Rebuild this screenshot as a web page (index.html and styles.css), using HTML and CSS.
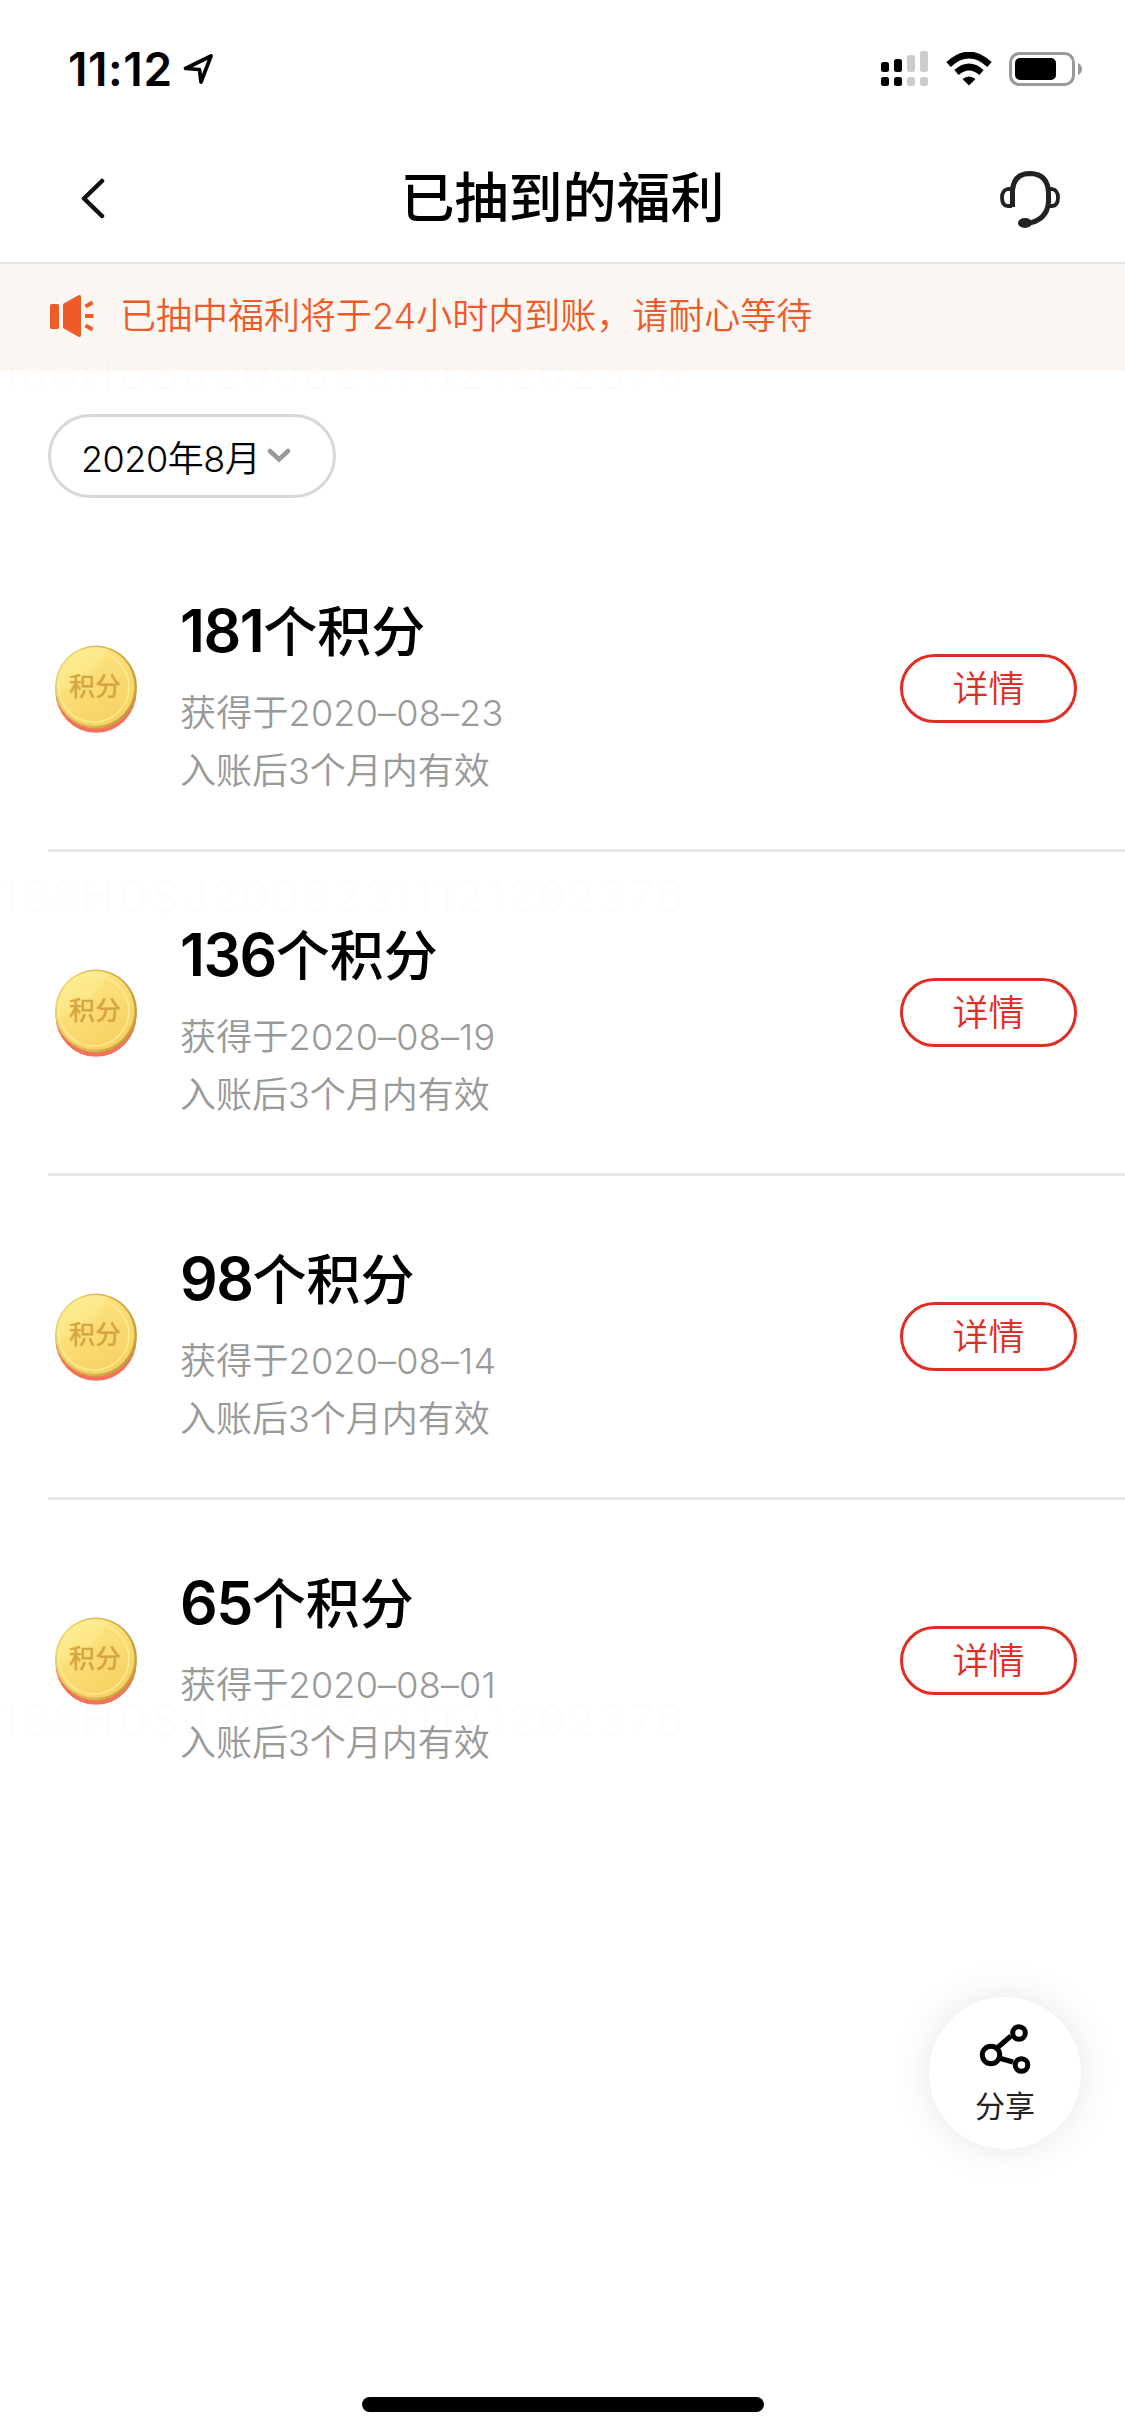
FILE: index.html
```html
<!DOCTYPE html>
<html lang="zh-CN">
<head>
<meta charset="utf-8">
<title>已抽到的福利</title>
<link rel="stylesheet" href="styles.css">
</head>
<body>
<svg class="defs" width="0" height="0" aria-hidden="true">
  <defs>
    <linearGradient id="face" x1="0" y1="0" x2="0.6" y2="1">
      <stop offset="0" stop-color="#fdec8c"/><stop offset="0.5" stop-color="#fbdd77"/><stop offset="1" stop-color="#f9d263"/>
    </linearGradient>
    <linearGradient id="shine" x1="0" y1="0" x2="0.5" y2="1">
      <stop offset="0" stop-color="#fff09a"/><stop offset="1" stop-color="#fdea8a" stop-opacity="0.2"/>
    </linearGradient>
    <linearGradient id="rim" x1="0" y1="0" x2="1" y2="0.3">
      <stop offset="0" stop-color="#efd56c"/><stop offset="1" stop-color="#c7a13f"/>
    </linearGradient>
    <symbol id="coin" viewBox="0 0 82 88">
      <ellipse cx="41" cy="46.500" rx="40.500" ry="41.300" fill="#f2735a"/>
      <ellipse cx="41" cy="42" rx="41" ry="41.500" fill="url(#rim)"/>
      <ellipse cx="40.500" cy="41.500" rx="39" ry="39.500" fill="url(#face)"/>
      <path d="M3 49A39 39 0 0 1 51 4Q46 30 3 49Z" fill="url(#shine)"/>
      <ellipse cx="39" cy="42" rx="35" ry="35" fill="none" stroke="#fdeb94" stroke-width="1.500"/>
      <text x="40" y="51" text-anchor="middle" class="coin-text">积分</text>
    </symbol>
  </defs>
</svg>
<div class="screen">
  <div class="status">
    <span class="time">11:12</span>
    <svg class="loc" width="31" height="32" viewBox="0 0 31 32"><path d="M2.500 15.500L28 3L18 29L16.500 16.500Z" fill="none" stroke="#000" stroke-width="3.700" stroke-linejoin="round"/></svg>
    <svg class="sig" width="48" height="38" viewBox="0 0 48 38">
      <g fill="#000"><rect x="0" y="12" width="8" height="10" rx="2.500"/><rect x="13" y="9" width="8" height="13" rx="2.500"/><rect x="0" y="27" width="8" height="9" rx="2.500"/><rect x="13" y="27" width="8" height="9" rx="2.500"/></g>
      <g fill="#ccc"><rect x="26" y="5" width="8" height="17" rx="2.500"/><rect x="39" y="1" width="8" height="21" rx="2.500"/><rect x="26" y="27" width="8" height="9" rx="2.500"/><rect x="39" y="27" width="8" height="9" rx="2.500"/></g>
    </svg>
    <svg class="wifi" width="46" height="34" viewBox="0 0 46 34">
      <g fill="none" stroke="#000" stroke-width="6.500"><path d="M2.500 12.500Q23-6.500 43.500 12.500"/><path d="M10.500 20.500Q23 9.500 35.500 20.500"/></g><path d="M16.500 27Q23 22 29.500 27L23 33.500Z"/>
    </svg>
    <svg class="bat" width="74" height="36" viewBox="0 0 74 36"><rect x="1.500" y="2.500" width="63" height="31" rx="9" fill="none" stroke="#999" stroke-width="3"/><rect x="6" y="7" width="41" height="22" rx="5"/><path d="M69 12Q73 14 73 18T69 24Z" fill="#999"/></svg>
  </div>
  <header class="nav">
    <svg class="back" width="26" height="42" viewBox="0 0 26 42"><path d="M22 3L4 20.500L22 38" fill="none" stroke="#111" stroke-width="4.500" stroke-linecap="round" stroke-linejoin="round"/></svg>
    <h1 class="title">已抽到的福利</h1>
    <svg class="kefu" width="62" height="60" viewBox="0 0 62 60"><path d="M13.500 38V21Q15 4.500 31 4.500Q49 5 49.500 24V33Q48 52 27 54.500" fill="none" stroke="#222" stroke-width="5"/><path d="M13 20H9Q3 21 3 28.500Q3 37 9 37H13M49 20H53Q59 21 59 28.500Q59 37 53 37H49" fill="none" stroke="#222" stroke-width="3.800"/><ellipse cx="26" cy="54" rx="7" ry="5" fill="#222"/></svg>
  </header>
  <div class="notice">
    <svg width="46" height="44" viewBox="0 0 46 44"><g fill="#ee5a28"><rect x="1" y="10" width="9" height="25" rx="1.500"/><path d="M14 10L29 1.500Q32 0 32 3V41Q32 44 29 42.500L14 34Z"/></g><path d="M36.500 12.500L43.500 8.500M36 22H44.500M36.500 31.500L43.500 35.500" stroke="#ee5a28" stroke-width="4"/></svg>
    <span>已抽中福利将于24小时内到账，请耐心等待</span>
  </div>
  <div class="filter">
    <button class="month"><span>2020年8月</span><svg width="24" height="16" viewBox="0 0 24 16"><path d="M3 3L12 11.500L21 3" fill="none" stroke="#999" stroke-width="4.500" stroke-linecap="round"/></svg></button>
  </div>
  <main class="list">
    <section class="item"><svg class="coin"><use href="#coin"/></svg><div class="info"><h2><b>181</b>个积分</h2><p class="date">获得于2020–08–23</p><p>入账后3个月内有效</p></div><button class="detail">详情</button></section>
    <section class="item"><svg class="coin"><use href="#coin"/></svg><div class="info"><h2><b>136</b>个积分</h2><p class="date">获得于2020–08–19</p><p>入账后3个月内有效</p></div><button class="detail">详情</button></section>
    <section class="item"><svg class="coin"><use href="#coin"/></svg><div class="info"><h2><b>98</b>个积分</h2><p class="date">获得于2020–08–14</p><p>入账后3个月内有效</p></div><button class="detail">详情</button></section>
    <section class="item"><svg class="coin"><use href="#coin"/></svg><div class="info"><h2><b>65</b>个积分</h2><p class="date">获得于2020–08–01</p><p>入账后3个月内有效</p></div><button class="detail">详情</button></section>
  </main>
  <button class="share">
    <svg width="54" height="54" viewBox="0 0 54 54"><g fill="none" stroke="#000"><path d="M19 25L33 13M21 35L35 39" stroke-width="5"/><circle cx="13" cy="32" r="8.700" stroke-width="5"/><circle cx="41" cy="10" r="6.300" stroke-width="5"/><circle cx="43.500" cy="42" r="6.300" stroke-width="5"/></g></svg>
    <span>分享</span>
  </button>
  <div class="home"></div>
  <div class="mark mark-top">188HDSJ20082311121202376</div>
  <div class="mark mark-mid">188HDSJ20082311121202376</div>
  <div class="mark mark-low">188HDSJ20082311121202376</div>
</div>
</body>
</html>
```
FILE: styles.css
```css
* { box-sizing: border-box; margin: 0; padding: 0; }
body { background: #fff; font-family: Inter, "Noto Sans CJK SC", sans-serif; font-weight: 350; color: #000; }
button { font: inherit; background: #fff; color: inherit; }
svg { display: block; flex: none; }
.defs { position: absolute; }
.screen { position: relative; width: 1125px; height: 2436px; display: flex; flex-direction: column; overflow: hidden; }
.status { height: 132px; padding: 5px 42px 0 68px; display: flex; align-items: center; }
.time { width: 103px; font-size: 46px; font-weight: 600; letter-spacing: 0.6px; white-space: nowrap; }
.loc { margin-left: 12px; }
.sig { margin-left: auto; }
.wifi { margin-left: 17px; }
.bat { margin-left: 17px; }
.nav { height: 132px; padding: 3px 64px 0; display: grid; grid-template-columns: 1fr auto 1fr; align-items: center; border-bottom: 2px solid #e6e6e6; }
.back { margin-left: 16px; }
.title { font-size: 54px; font-weight: 500; line-height: 80px; }
.kefu { justify-self: end; }
.notice { height: 107px; padding: 0 0 3px 49px; display: flex; align-items: center; gap: 25px; background: #fdf7f4; color: #ee5a28; font-size: 36px; line-height: 48px; }
.filter { padding: 43px 48px 0; height: 157px; }
.month { width: 288px; height: 84px; padding-left: 30px; display: flex; align-items: center; gap: 7px; border: 3px solid #d8d8d8; border-radius: 42px; font-size: 36px; letter-spacing: -0.5px; white-space: nowrap; }
.list { padding-left: 48px; }
.item { height: 324px; padding: 0 48px 0 7px; display: flex; align-items: center; border-bottom: 3px solid #e8e8e8; }
.item:last-child { border-bottom-color: transparent; }
.coin { width: 82px; height: 88px; }
.coin-text { font: 500 26px "Noto Sans CJK SC", sans-serif; fill: #d6a440; }
.info { margin-left: 43px; padding-top: 13px; flex: 1; }
.info h2 { font-size: 54px; font-weight: 500; line-height: 80px; height: 93px; white-space: nowrap; }
.info b { font-size: 59px; font-weight: 600; letter-spacing: -1.5px; }
.info p { font-size: 36px; line-height: 58px; color: #999; }
.info .date { letter-spacing: 0.2px; }
.detail { width: 177px; height: 69px; border: 3px solid #e02e24; border-radius: 35px; color: #e02e24; font-size: 36px; line-height: 62px; }
.share { position: absolute; left: 929px; top: 1997px; width: 152px; height: 152px; border: 0; border-radius: 50%; box-shadow: 0 0 42px rgba(0, 0, 0, 0.1); display: flex; flex-direction: column; align-items: center; padding-top: 26px; font-size: 30px; font-weight: 400; color: #222; line-height: 44px; gap: 7px; }
.home { width: 402px; height: 15px; margin: auto auto 24px 362px; border-radius: 8px; background: #000; }
.mark { position: absolute; left: 0; font-size: 43px; font-weight: 300; line-height: 52px; letter-spacing: 4px; white-space: nowrap; color: rgba(200, 190, 110, 0.045); pointer-events: none; }
.mark-top { top: 347px; }
.mark-mid { top: 870px; }
.mark-low { top: 1694px; }
```
